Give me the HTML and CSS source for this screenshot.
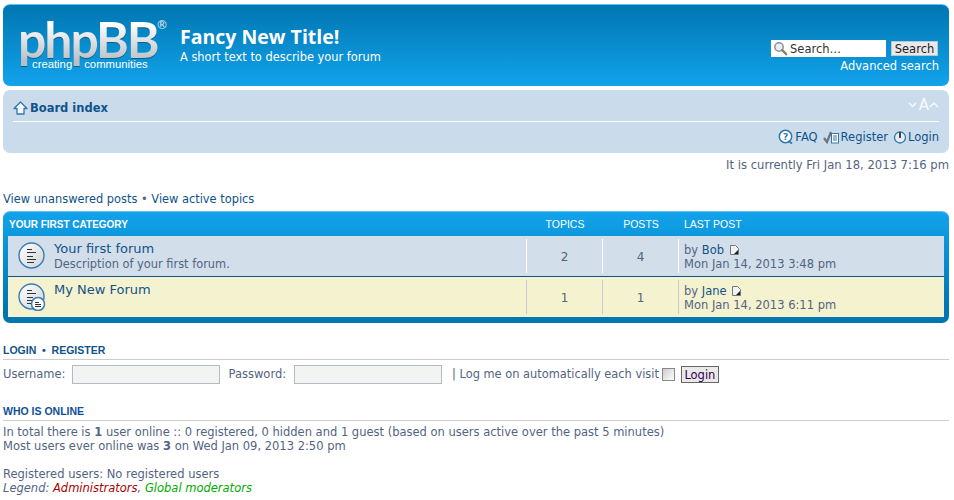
FILE: index.html
```html
<!DOCTYPE html>
<html lang="en">
<head>
<meta charset="utf-8">
<title>Fancy New Title!</title>
<link rel="stylesheet" href="styles.css">
</head>
<body>
<div class="headerbar">
  <div class="logo">
    <span class="logo-word">phpBB</span><span class="logo-reg">®</span>
    <span class="logo-tag"><span>creating</span><span>communities</span></span>
  </div>
  <div class="site">
    <h1>Fancy New Title!</h1>
    <p>A short text to describe your forum</p>
  </div>
  <div class="search">
    <div class="search-row">
      <div class="search-input">
        <svg class="mag" width="15" height="15" viewBox="0 0 15 15"><circle cx="6" cy="6" r="4.2" fill="#e8eef2" stroke="#8c9296" stroke-width="1.5"/><path d="M9.2 9.2 13.2 13.2" stroke="#8a7f6e" stroke-width="2.4" stroke-linecap="round"/></svg>
        <span>Search…</span>
      </div>
      <button class="search-btn">Search</button>
    </div>
    <a class="adv" href="#">Advanced search</a>
  </div>
</div>

<div class="navbar">
  <div class="nav-top">
    <a class="crumb" href="#">
      <svg width="15" height="14" viewBox="0 0 15 14"><path d="M7.500 1 14 7.500h-3V13H4V7.500H1z" fill="#f4f8fb" stroke="#2f78ad" stroke-width="1.300" stroke-linejoin="round"/></svg>
      Board index
    </a>
    <span class="fontsize"><svg width="11" height="6" viewBox="0 0 11 6"><path d="M1 1 4.500 4.500 8 1" fill="none" stroke="#f7fafc" stroke-width="1.500"/></svg><b>A</b><svg width="10" height="6" viewBox="0 0 10 6"><path d="M1 5 5 1 9 5" fill="none" stroke="#f7fafc" stroke-width="1.500"/></svg></span>
  </div>
  <div class="nav-links">
    <a href="#"><svg width="16" height="16" viewBox="0 0 16 16"><circle cx="7.500" cy="7.500" r="6.200" fill="#fff" stroke="#2f78ad" stroke-width="1.500"/><path d="M10.500 12l3.500 2.500" stroke="#2f78ad" stroke-width="1.800"/><text x="7.500" y="11" class="faq-q">?</text></svg>FAQ</a>
    <a href="#"><svg width="17" height="16" viewBox="0 0 17 16"><path d="M1 9l3 4 4-10" fill="none" stroke="#6f7376" stroke-width="2.200"/><rect x="8.500" y="4.500" width="7" height="9.500" fill="#fff" stroke="#2f78ad"/><path d="M10 7h4M10 9h4M10 11h4" stroke="#2f78ad"/></svg>Register</a>
    <a href="#"><svg width="14" height="15" viewBox="0 0 14 15"><circle cx="7" cy="7.500" r="5.500" fill="#e6eef5" stroke="#2f78ad" stroke-width="1.300"/><path d="M7 2v6" stroke="#444" stroke-width="2"/></svg>Login</a>
  </div>
</div>

<p class="time">It is currently Fri Jan 18, 2013 7:16 pm</p>
<p class="quick"><a href="#">View unanswered posts</a> • <a href="#">View active topics</a></p>

<div class="forabg">
  <div class="row-head">
    <span class="c-name">Your first category</span>
    <span class="c-num">Topics</span>
    <span class="c-num">Posts</span>
    <span class="c-last">Last post</span>
  </div>
  <div class="row row-blue">
    <div class="c-name forum">
      <svg class="ficon" width="28" height="28" viewBox="0 0 28 28"><use href="#fi"/></svg>
      <div>
        <a class="ftitle" href="#">Your first forum</a>
        <div class="fdesc">Description of your first forum.</div>
      </div>
    </div>
    <div class="c-num cell">2</div>
    <div class="c-num cell">4</div>
    <div class="c-last cell">by <a href="#">Bob</a> <svg class="post" width="10" height="10" viewBox="0 0 10 10"><use href="#pi"/></svg><br>Mon Jan 14, 2013 3:48 pm</div>
  </div>
  <div class="row row-yellow">
    <div class="c-name forum">
      <svg class="ficon" width="28" height="28" viewBox="0 0 28 28"><use href="#fi"/><circle cx="20" cy="21" r="6.500" fill="#fff" stroke="#3a7cb4" stroke-width="1.500"/><path d="M17 19.500h4M17 21.500h6M17 23.500h6" stroke="#333"/></svg>
      <div>
        <a class="ftitle" href="#">My New Forum</a>
      </div>
    </div>
    <div class="c-num cell">1</div>
    <div class="c-num cell">1</div>
    <div class="c-last cell">by <a href="#">Jane</a> <svg class="post" width="10" height="10" viewBox="0 0 10 10"><use href="#pi"/></svg><br>Mon Jan 14, 2013 6:11 pm</div>
  </div>
</div>

<h3 class="sect"><a href="#">Login</a>&nbsp; • &nbsp;<a href="#">Register</a></h3>
<div class="login">
  <label>Username:</label><span class="field"></span>
  <label class="pw">Password:</label><span class="field"></span>
  <span class="auto">| Log me on automatically each visit</span>
  <span class="check"></span>
  <button class="login-btn">Login</button>
</div>

<h3 class="sect who">Who is online</h3>
<p class="online">In total there is <b>1</b> user online :: 0 registered, 0 hidden and 1 guest (based on users active over the past 5 minutes)<br>Most users ever online was <b>3</b> on Wed Jan 09, 2013 2:50 pm</p>
<p class="online reg">Registered users: No registered users<br><em>Legend: <span class="admin">Administrators</span>, <span class="mod">Global moderators</span></em></p>

<svg class="defs" width="0" height="0" aria-hidden="true">
  <defs>
    <linearGradient id="fg" x1="0" y1="0" x2="1" y2="1"><stop offset="0" stop-color="#fff"/><stop offset="1" stop-color="#d0d4d7"/></linearGradient>
    <symbol id="fi" viewBox="0 0 28 28">
      <circle cx="13.500" cy="13.500" r="12.500" fill="url(#fg)" stroke="#3a7cb4" stroke-width="1.400"/>
      <path d="M9 7.500h5M9 10.500h9M9 14.500h6M9 17.500h9M9 20.500h7" stroke="#333"/>
    </symbol>
    <symbol id="pi" viewBox="0 0 10 10">
      <path d="M.500.500h5l3 3v6h-8z" fill="#eef3f7" stroke="#777"/>
      <path d="M4 9l4-4v4z" fill="#222"/>
    </symbol>
  </defs>
</svg>
</body>
</html>
```
FILE: styles.css
```css
* { box-sizing: border-box; }
html, body { margin: 0; }
body {
  padding: 0 5px 0 3px;
  font-family: "DejaVu Sans", Verdana, sans-serif;
  font-size: 11.500px;
  line-height: 14px;
  color: #536482;
  background: #fff;
  overflow: hidden;
  height: 500px;
}
a { color: #105289; text-decoration: none; }
p, h1, h3 { margin: 0; }
.defs { position: absolute; }

.headerbar {
  margin-top: 4px;
  height: 82px;
  border-radius: 7px;
  border-top: 1px solid #5fc4ee;
  background: linear-gradient(#0076b1, #12a3eb);
  color: #fff;
  display: flex;
  align-items: flex-start;
  padding: 0 10px 0 15px;
}
.logo {
  position: relative;
  width: 162px;
  height: 70px;
  flex: none;
}
.logo-word {
  position: absolute;
  left: 0;
  top: 3px;
  font: 700 50px/62px "Lato", sans-serif;
  letter-spacing: -2.100px;
  background: linear-gradient(#fff 25%, #b9c0c5 85%);
  -webkit-background-clip: text;
  background-clip: text;
  color: transparent;
  filter: drop-shadow(0 1px 0 #0b5f8e);
}
.logo-reg { position: absolute; left: 138px; top: 13px; font-size: 12px; color: #e6eef3; }
.logo-tag {
  position: absolute;
  left: 14px;
  top: 52px;
  display: flex;
  gap: 12px;
  font: 400 11.300px/14px "Liberation Sans", sans-serif;
}
.site { padding-top: 19px; }
.site h1 { font: 700 19.500px/26px "Open Sans", sans-serif; }
.site p { font-size: 11.400px; line-height: 12px; margin-top: 1px; }
.search {
  margin-left: auto;
  margin-top: 35px;
  display: flex;
  flex-direction: column;
  align-items: flex-end;
}
.search-row { display: flex; gap: 5px; align-items: center; margin-right: 1px; }
.search-input {
  width: 115px;
  height: 17px;
  background: #fff;
  color: #333;
  display: flex;
  align-items: center;
  gap: 2px;
  padding-left: 2px;
  font-size: 11.500px;
}
.search-btn, .login-btn {
  font: 11.500px/12px "DejaVu Sans", sans-serif;
  padding: 0;
  background: #e9e9e9;
}
.search-btn { width: 47px; height: 15px; border: 1px solid #b5c7d6; color: #222; }
.adv { color: #fff; font-size: 11.500px; line-height: 14px; margin-top: 2px; }

.navbar {
  margin-top: 4px;
  height: 63px;
  border-radius: 7px;
  background: #cadceb;
  padding: 0 10px;
}
.nav-top {
  height: 32px;
  border-bottom: 1px solid #fff;
  display: flex;
  justify-content: space-between;
  align-items: flex-start;
  padding-top: 11px;
}
.crumb { font-weight: 700; font-size: 11.500px; display: flex; align-items: center; gap: 2px; }
.fontsize { color: #f7fafc; display: flex; align-items: center; margin-top: -3px; font-size: 15px; }
.fontsize b { font-weight: 400; }
.nav-links {
  display: flex;
  justify-content: flex-end;
  gap: 5px;
  padding-top: 7px;
  height: 26px;
}
.nav-links a { display: flex; align-items: center; gap: 1px; height: 16px; }
.nav-links svg { flex: none; }
.faq-q { font: 700 9px "DejaVu Sans", sans-serif; fill: #2f78ad; text-anchor: middle; }

.time { text-align: right; margin-top: 5px; height: 34px; font-size: 11.600px; }
.quick { height: 14px; font-size: 11.400px; }
.quick a { color: #105289; }

.forabg {
  margin-top: 5px;
  border-radius: 7px;
  border-top: 1px solid #5fc4ee;
  background: linear-gradient(#12a3eb, #0076b1 95px);
  padding: 0 5px 6px;
}
.row-head {
  display: flex;
  height: 24px;
  align-items: center;
  color: #fff;
  font: 700 10px/14px "Liberation Sans", sans-serif;
  text-transform: uppercase;
}
.row-head .c-num, .row-head .c-last { font-weight: 400; font-size: 10.500px; }
.c-name { flex: 0 0 517px; padding-left: 1px; }
.c-num { flex: 0 0 76px; text-align: center; }
.c-last { flex: 1; padding-left: 5px; }
.row-head .c-name { margin-right: 1px; flex-basis: 518px; padding-top: 2px; }
.row { display: flex; height: 40px; padding: 3px 0; align-items: stretch; }
.row-blue { background: #d2dfea; border-bottom: 1px solid #105289; height: 41px; }
.row-yellow { background: #f5f2d0; }
.cell { border-left: 1px solid #fff; }
.row-yellow .cell { border-left-color: #c9c9d4; }
.c-num.cell { line-height: 36px; font-size: 12px; }
.c-last.cell { padding-top: 4px; }
.forum { display: flex; gap: 8px; padding: 3px 0 0 10px; flex-basis: 518px; }
.ftitle { display: block; font-size: 13px; line-height: 15px; margin-top: -1px; }
.fdesc { line-height: 13px; margin-top: 2px; font-size: 11.400px; }
.ficon { flex: none; }
.post { vertical-align: -1px; margin-left: 2px; }

.sect {
  font: 700 10.500px/13px "Liberation Sans", sans-serif;
  text-transform: uppercase;
  color: #115098;
  border-bottom: 1px solid #ccc;
  margin-top: 21px;
  height: 16px;
}
.login { display: flex; align-items: center; height: 21px; margin-top: 4px; }
.login label, .auto { padding-bottom: 2px; }
.login label { margin-right: 6px; }
.field {
  width: 148px;
  height: 19px;
  background: #f2f3f3;
  border: 1px solid #b4bac0;
}
.login .pw { margin-left: 9px; margin-right: 8px; }
.auto { margin-left: 10px; font-size: 11.400px; }
.check {
  width: 13px;
  height: 13px;
  margin-left: 3px;
  border: 1px solid #888;
  background: linear-gradient(135deg, #ccc, #fff);
}
.login-btn {
  margin-left: 6px;
  width: 38px;
  height: 17px;
  border: 1px solid #666;
  color: #30004a;
}
.who { margin-top: 20px; }
.online { margin-top: 4px; }
.online.reg { margin-top: 14px; }
.admin { color: #a00; }
.mod { color: #0a0; }
```
